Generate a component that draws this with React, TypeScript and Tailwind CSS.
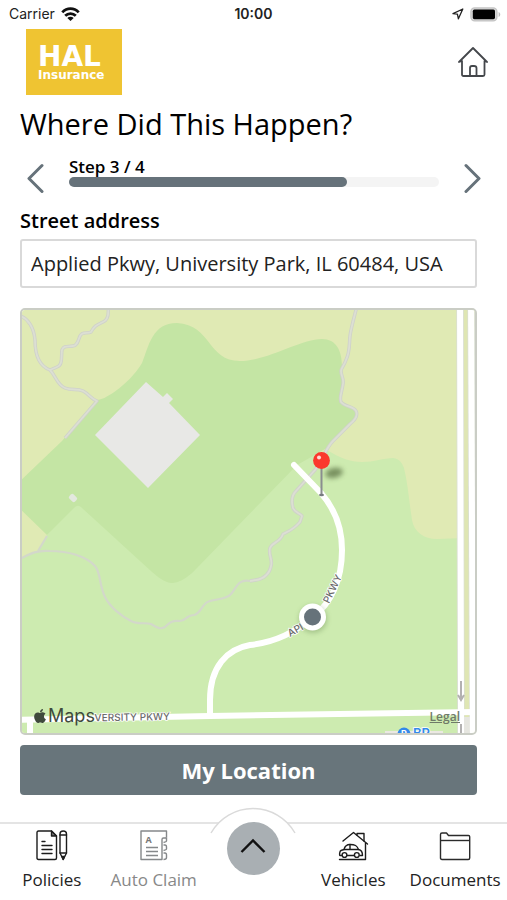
import React from "react";
import { FaApple } from "react-icons/fa";

function StatusBar() {
  return (
    <div className="relative flex h-7 items-center justify-between pl-[9px] pr-[6px] font-['Inter',sans-serif] text-sm text-[#222]">
      <div className="flex items-center gap-[6px]">
        <span>Carrier</span>
        <svg width="19" height="15" viewBox="0 0 19 15" fill="none" stroke="#111" strokeWidth="2.8">
          <path d="M1.3 5.4C6 .4 13 .4 17.7 5.4" />
          <path d="M4.2 8.8C7.2 5.8 11.8 5.8 14.8 8.8" />
          <path d="M9.5 14L6.3 10.9C8.2 9.3 10.8 9.3 12.7 10.9Z" fill="#111" stroke="none" />
        </svg>
      </div>
      <span className="absolute left-1/2 -translate-x-1/2 font-semibold">10:00</span>
      <div className="flex items-center gap-[6px]">
        <svg width="12" height="12" viewBox="0 0 12 12" fill="none" stroke="#222" strokeWidth="1.3" strokeLinejoin="round">
          <path d="M10.8 1L1 5.6L5.4 6.2L6.4 10.8Z" />
        </svg>
        <svg width="31" height="15" viewBox="0 0 31 15">
          <rect x=".9" y=".9" width="26" height="13" rx="3.8" fill="#d6d6d6" stroke="#c4c4c4" strokeWidth="1.4" />
          <rect x="2.8" y="2.6" width="22.2" height="9.6" rx="1.6" fill="#000" />
          <path d="M28.6 5C30.8 5.8 30.8 9.2 28.6 10Z" fill="#bdbdbd" />
        </svg>
      </div>
    </div>
  );
}

function Logo() {
  return (
    <div className="flex h-[66px] w-24 flex-col items-start justify-center bg-[#efc432] pl-3 pt-[3px] font-['DejaVu_Sans',sans-serif] font-bold text-white">
      <span className="text-[28px] leading-6">HAL</span>
      <span className="text-xs leading-[13px]">Insurance</span>
    </div>
  );
}

const trails = [
  "M20 316C28 318 34 328 35 340C35 355 39 366 50 370C56 376 57 385 65 388C72 391 77 388 83 391C89 394 91 399 97 401L65 438",
  "M108 306C109 314 108 320 103 322C97 325 95 325 91 332C87 334 82 331 80 336C78 341 77 346 73 346C68 347 64 345 62 350C61 357 63 365 57 367L50 370",
  "M357 306C354 318 351 328 350 336C349 346 350 352 346 360C344 366 341 368 341 371C341 376 344 378 343 384C342 392 339 397 341 402C345 407 353 406 356 411C358 415 355 420 350 424L333 441C325 449 323 460 315 470L296 491C290 497 292 504 293 508C295 513 300 513 302 516L300 522C293 530 289 531 283 534C280 543 272 542 270 548C268 554 273 560 271 566C270 573 264 579 256 580L250 581",
];

function Map() {
  return (
    <div className="relative h-[427px] overflow-hidden rounded-[5px] border-2 border-[#cacdc5]">
      <svg className="h-full w-full" viewBox="22 310 453 423" preserveAspectRatio="xMidYMid slice">
        <defs>
          <filter id="soft" x="-50%" y="-80%" width="200%" height="260%">
            <feGaussianBlur stdDeviation="2.4" />
          </filter>
        </defs>
        <rect x="0" y="290" width="507" height="460" fill="#e0eab4" />

        {/* light park */}
        <path d="M15 560L38 551L47 535L78 500L295 462L327 450C340 458 350 462 362 462C374 462 384 458 393 458C400 459 402 463 404 468C408 485 409 500 412 520C414 532 424 539 437 539L464 538V750H15Z" fill="#cdebb0" />

        {/* darker park */}
        <path d="M15 486L62 441L95 401C97 399 102 400 106 397C120 390 136 374 142 363C149 346 152 323 177 323C212 325 207 361 240 361C268 361 300 339 322 339C336 339 342 350 342 367L343 383L340 400L356 410L356 418L327 448L297 465L197 568C185 581 176 583 171 583C164 582 158 577 152 572L82 508C79 505 77 505 74 508L47 535L15 504Z" fill="#c4e5a4" />

        {/* building */}
        <path d="M146 382L163 397L167 393L173 399L169 403L200 435L148 488L95 435Z" fill="#e8e8e6" />
        <rect x="-4" y="-3" width="8" height="6" rx="2" fill="#e3e8df" transform="translate(73 498) rotate(45)" />

        {/* trails */}
        <g fill="none" strokeLinejoin="round">
          {trails.map((d) => (
            <path key={d} d={d} stroke="#cfd1ca" strokeWidth="3.4" />
          ))}
          {trails.map((d) => (
            <path key={d} d={d} stroke="#dcdfd3" strokeWidth="1.8" />
          ))}
        </g>
        <g fill="none" stroke="#d3d8ca" strokeWidth="2.2">
          <path d="M250 581C238 579 237 587 231 594C225 601 212 598 206 603C201 607 200 614 194 615C186 615 186 621 180 621C171 620 168 624 165 627C160 630 156 627 151 624C145 622 138 625 131 621C121 616 110 607 105 597C99 585 101 573 95 566C86 556 68 551 50 551C38 550 31 553 20 559" />
          <path d="M38 551L47 536" />
        </g>

        {/* roads */}
        <rect x="463" y="290" width="6" height="460" fill="#dfe6b3" />
        <g fill="none" stroke="#dadfd2" strokeWidth="7.6">
          <path d="M460 290L461 750" />
          <path d="M471 290L473 750" />
        </g>
        <path d="M385 731H443V740H385Z" fill="#ebe8e2" />
        <path d="M464 717H470V740H464Z" fill="#e6e6e0" />
        <g fill="none" stroke="#fff" strokeWidth="6">
          <path d="M460 290L461 714V750" />
          <path d="M471 290L473 750" />
          <path d="M15 720L210 716L477 712" />
          <path d="M30 719V750" />
          <path d="M294 465L321 493C335 509 342 529 342 550C342 580 331 603 313 617C298 630 279 642 250 645C227 649 210 667 210 700V716" strokeLinecap="round" strokeLinejoin="round" />
        </g>
        <path d="M461 681V699M458 695L461 700L464 695" stroke="#b3b1b1" strokeWidth="2" fill="none" />
        <path d="M461 724V750" stroke="#b3b1b1" strokeWidth="2" />

        {/* road names */}
        <g fill="#6b6b6b" stroke="#fff" strokeWidth="1.5" paintOrder="stroke" fontFamily="Inter, sans-serif" fontSize="10" fontWeight="500">
          <text x="170" y="720" textAnchor="end" transform="rotate(-1 170 720)">VERSITY PKWY</text>
          <text transform="translate(290 637) rotate(-29)">API</text>
          <text transform="translate(329 604) rotate(-64)">PKWY</text>
        </g>

        <circle cx="404" cy="734" r="6.5" fill="#3389ea" />
        <text x="401" y="737" fill="#fff" fontFamily="Inter, sans-serif" fontSize="9" fontWeight="700">P</text>
        <text x="413" y="738" fill="#3389ea" stroke="#fff" strokeWidth="1.5" paintOrder="stroke" fontFamily="Inter, sans-serif" fontSize="13" fontWeight="600">BP</text>

        {/* current location */}
        <circle cx="313" cy="619" r="14" fill="#5b7a45" opacity=".35" filter="url(#soft)" />
        <circle cx="312.5" cy="617" r="13.5" fill="#fff" />
        <circle cx="312.5" cy="617" r="8.5" fill="#66727a" />

        {/* pin */}
        <ellipse cx="334" cy="473" rx="9" ry="5" fill="#4c6135" opacity=".65" filter="url(#soft)" transform="rotate(-12 334 473)" />
        <path d="M321.5 467V494" stroke="#8a8d8f" strokeWidth="2" />
        <ellipse cx="321.5" cy="495" rx="2.5" ry="1.2" fill="#777b80" />
        <circle cx="321.5" cy="460.5" r="8.4" fill="#fb382d" />
        <circle cx="319" cy="457.5" r="2" fill="#ffd9d4" />
      </svg>
      <div className="absolute bottom-[5px] left-[10px] flex items-center font-['Inter',sans-serif] text-lg leading-6 text-[#3f4a3c]">
        <FaApple size={16} />
        <span>Maps</span>
      </div>
      <a href="#legal" className="absolute bottom-[8px] right-[15px] font-['Open_Sans',sans-serif] text-xs font-semibold leading-4 text-[#6f7a68] underline">
        Legal
      </a>
    </div>
  );
}

function PoliciesIcon() {
  return (
    <svg width="32" height="32" viewBox="0 0 32 32" fill="none" stroke="#1c1c1c" strokeWidth="1.4" strokeLinejoin="round" strokeLinecap="round">
      <path d="M2.5 1H15.5L20.5 6V28C20.5 29 20 29.500 19 29.500H2.5C1.5 29.500 1 29 1 28V2.500C1 1.500 1.5 1 2.5 1Z" />
      <path d="M15.5 1V6H20.5Z" fill="#777" />
      <path d="M6 11.5H9M6 15.5H16M6 19.5H16M6 23.5H16" />
      <path d="M24 4C24 0 30.5 0 30.5 4V23L27.2 29.500L24 23Z" />
      <path d="M24 5H30.5M24 23H30.5" />
      <path d="M26 26.5H28.5L27.2 29.500Z" fill="#1c1c1c" />
    </svg>
  );
}

function ClaimIcon() {
  return (
    <svg width="32" height="32" viewBox="0 0 32 32" fill="none" stroke="#85888a" strokeWidth="1.4" strokeLinejoin="round">
      <path d="M28.500 7.500V1H3V29.500H24V9.500C24 8.500 24.5 8 25.5 8H28.500" />
      <path d="M28.500 7.500V11C28.500 12 27 12 25.5 12.5M25.5 15H27C28.500 15 28.500 16 28.500 17V19C28.500 20 27 20 25.5 20.5M25.5 23H27C28.500 23 28.500 24 28.500 25V27.500C28.500 29 27 29.500 25.500 29.500" />
      <path d="M8 17.500H20M8 21.500H20M8 25.500H20" />
      <text x="7.5" y="12.500" fill="#777" stroke="none" fontFamily="Open Sans, sans-serif" fontSize="9" fontWeight="700">A</text>
    </svg>
  );
}

function VehiclesIcon() {
  return (
    <svg width="32" height="32" viewBox="0 0 32 32" fill="none" stroke="#1c1c1c" strokeWidth="1.4" strokeLinejoin="round" strokeLinecap="round">
      <path d="M6 11L16.500 2.500L30.500 14" />
      <path d="M20 5V3.500H27V11" />
      <path d="M28.500 13V29.500H2.5" />
      <path d="M4.5 25.500H3C2.3 25.500 2.5 21 4 20.500L7 19.500C8 15.500 10 14.500 13 14.500C18 14.500 20 15.500 21.5 19.500C24.5 20 25.500 21.500 25.500 25.500H23" />
      <path d="M7 19.500H21.5M13 14.500V19.500M10.5 25.500H17" />
      <circle cx="7.5" cy="25" r="2.4" />
      <circle cx="19.8" cy="25" r="2.4" />
    </svg>
  );
}

function DocumentsIcon() {
  return (
    <svg width="32" height="32" viewBox="0 0 32 32" fill="none" stroke="#2b2b2b" strokeWidth="1.4" strokeLinejoin="round">
      <path d="M1.5 28V4.5C1.5 3.5 2 3 3 3H7.5L9.5 5.500H29.5C30.3 5.500 30.7 6 30.7 6.700V28C30.7 29 30.2 29.500 29.2 29.500H3C2 29.500 1.5 29 1.5 28Z" />
      <path d="M1.5 10.5H30.7" />
    </svg>
  );
}

function NavItem({ label, icon, muted }: { label: string; icon: React.ReactNode; muted?: boolean }) {
  return (
    <a href="#nav" className={muted ? "flex flex-col items-center text-[#888]" : "flex flex-col items-center text-[#222]"}>
      {icon}
      <span className="mt-[6px] text-[17px] leading-6">{label}</span>
    </a>
  );
}

export default function App() {
  return (
    <div className="min-h-screen bg-white font-['Open_Sans',sans-serif] text-black">
      <StatusBar />
      <main className="pl-5 pr-[30px]">
        <header className="flex items-center justify-between pl-[6px] pt-px">
          <Logo />
          <button type="button" aria-label="Home" className="-mr-[11px]">
            <svg width="30" height="32" viewBox="0 0 30 32" fill="none" stroke="#44474b" strokeWidth="1.8" strokeLinejoin="round" strokeLinecap="round">
              <path d="M1 16L15 2L29 16L26.5 15V28.5C26.5 29.7 26 30 25 30H5.5C4.5 30 4 29.7 4 28.5V15Z" fill="#fff" />
              <path d="M12 30V22C12 20.5 12.5 20 14 20H16C17.5 20 18.5 20.5 18.5 22V30" />
            </svg>
          </button>
        </header>

        <h1 className="mt-[9px] text-[29px] leading-10">Where Did This Happen?</h1>

        <div className="-mr-[5px] mt-[13px] flex items-end gap-6 pl-[6px]">
          <button type="button" aria-label="Previous step">
            <svg className="block" width="19" height="30" viewBox="0 0 19 30" fill="none" stroke="#66727a" strokeWidth="3" strokeLinecap="round" strokeLinejoin="round">
              <path d="M16 2.5L3 15.5L16 28.5" />
            </svg>
          </button>
          <div className="flex-1">
            <p className="text-[17px] font-semibold leading-5">Step 3 / 4</p>
            <div className="mb-[6px] h-[10px] rounded-full bg-[#f4f4f4]">
              <div className="h-full w-3/4 rounded-full bg-[#66727a]" />
            </div>
          </div>
          <button type="button" aria-label="Next step">
            <svg className="block" width="19" height="30" viewBox="0 0 19 30" fill="none" stroke="#66727a" strokeWidth="3" strokeLinecap="round" strokeLinejoin="round">
              <path d="M3 2.5L16 15.5L3 28.5" />
            </svg>
          </button>
        </div>

        <label htmlFor="address" className="mt-[14px] block text-xl font-semibold leading-7">
          Street address
        </label>
        <input
          id="address"
          defaultValue="Applied Pkwy, University Park, IL 60484, USA"
          className="mt-1 block h-[49px] w-full rounded-[3px] border-2 border-[#d9d9d9] px-[9px] text-xl text-[#222]"
        />

        <div className="mt-5">
          <Map />
        </div>

        <button type="button" className="mt-[10px] block h-[50px] w-full rounded-[4px] bg-[#68757b] text-[22px] font-bold text-white">
          My Location
        </button>
      </main>

      <nav className="relative mt-[27px] grid grid-cols-[26fr_25fr_25fr_25fr_26fr] border-t-2 border-[#e4e4e4] pt-[6px]">
        <NavItem label="Policies" icon={<PoliciesIcon />} />
        <NavItem label="Auto Claim" icon={<ClaimIcon />} muted />
        <div className="flex justify-center">
          <svg className="absolute -top-[17px]" width="86" height="27" viewBox="0 0 86 27">
            <path d="M1 26A48.3 48.3 0 0 1 85 26" fill="#fff" stroke="#dadada" strokeWidth="1.5" />
          </svg>
          <button type="button" aria-label="Open menu" className="relative -mt-2 flex h-[53px] w-[53px] items-center justify-center rounded-full bg-[#a9afb3] pb-[6px]">
            <svg width="26" height="16" viewBox="0 0 26 16" fill="none" stroke="#111" strokeWidth="2.4">
              <path d="M1.5 14L13 2.5L24.5 14" />
            </svg>
          </button>
        </div>
        <NavItem label="Vehicles" icon={<VehiclesIcon />} />
        <NavItem label="Documents" icon={<DocumentsIcon />} />
      </nav>
    </div>
  );
}
